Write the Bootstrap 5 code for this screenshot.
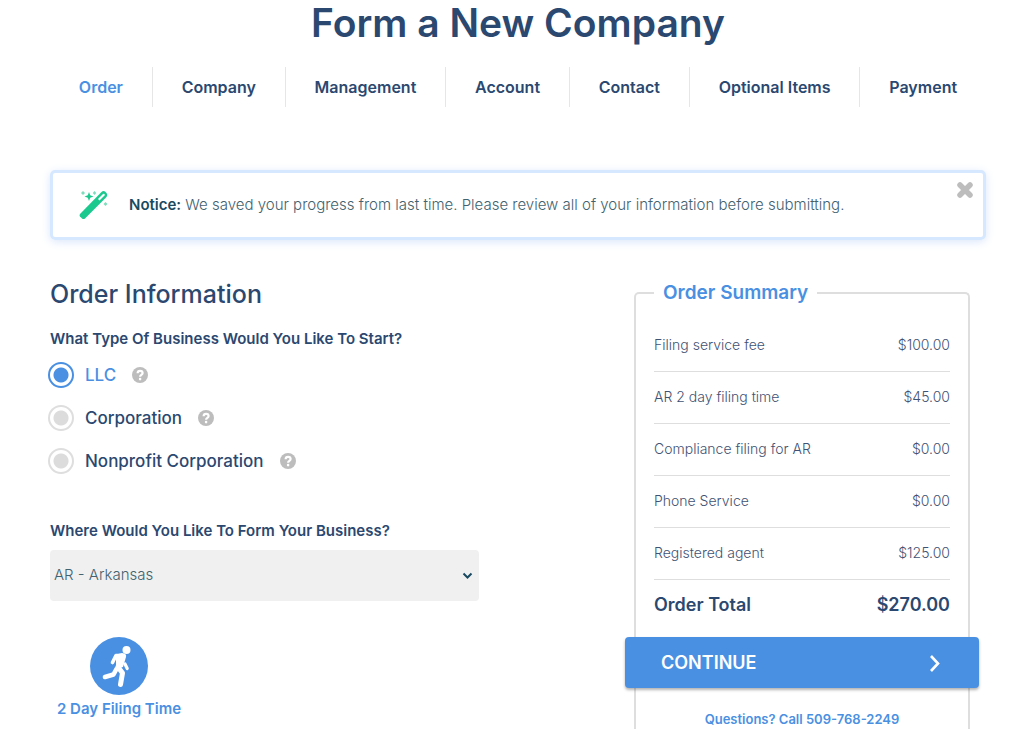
<!DOCTYPE html>
<html lang="en">
<head>
<meta charset="utf-8">
<meta name="viewport" content="width=device-width, initial-scale=1">
<title>Form a New Company</title>
<link href="https://cdn.jsdelivr.net/npm/bootstrap@5.3.0/dist/css/bootstrap.min.css" rel="stylesheet">
<style>
:root { --navy: #2b4870; --blue: #4a90e2; --line: #dedede; --mute: #bdbdbd; }
body { font-family: Inter, "Open Sans", sans-serif; font-size: 14px; line-height: 20px; color: var(--navy); background: #fff; }
a { color: var(--blue); text-decoration: none; }
.page { padding: 0 38px 0 50px; }
.page-title { font-size: 39px; line-height: 46px; font-weight: 600; }
.steps { margin-top: 21px; }
.steps .nav-item + .nav-item { border-left: 1px solid #e6e6e6; }
.steps .nav-link { color: var(--navy); font-size: 16px; line-height: 40px; font-weight: 600; padding: 0; }
.steps .nav-link.active { color: var(--blue); }
.notice { margin-top: 63px; padding: 17px 26px; border: 3px solid #d6e8ff; border-radius: 5px; box-shadow: 0 2px 10px #dbe7fb; color: #42626f; font-size: 15px; font-weight: 300; }
.notice svg { margin-right: 20px; }
.notice strong { color: #194a60; font-weight: 600; }
.notice-close { top: 7px; right: 8px; line-height: 0; }
.notice-close svg { margin: 0; }
.columns { margin-top: 41px; }
.section-title { font-size: 25px; line-height: 26px; font-weight: 500; }
.question { font-size: 15px; line-height: 20px; font-weight: 600; }
.choices { margin-top: 22px; }
.choices .question { margin-bottom: 13px; }
.choice { height: 26px; margin-bottom: 17px; margin-left: -2px; }
.choice label { font-size: 17px; line-height: 24px; font-weight: 500; margin: 0 16px 0 11px; }
.choice input { appearance: none; width: 26px; height: 26px; margin: 0; border: 2px solid var(--line); border-radius: 50%; background: radial-gradient(circle, #dcdcdc 7px, #fff 8px); }
.choice input:checked { border-color: var(--blue); background: radial-gradient(circle, var(--blue) 7px, #fff 8px); }
.choice input:checked + label { color: var(--blue); }
.state-field { margin-top: 47px; }
.state-field select { margin-top: 9px; height: 51px; border: 0; border-radius: 4px; color: #42626f; font-size: 15px; font-weight: 300; padding: 0 32px 0 4px; background-color: #f0f0f0; background-position: right 6px center; background-size: 11px 11px; background-image: url("data:image/svg+xml,%3Csvg xmlns='http://www.w3.org/2000/svg' viewBox='0 0 11 11'%3E%3Cpath d='M1.5 3.5l4 4 4-4' fill='none' stroke='%23194a60' stroke-width='2'/%3E%3C/svg%3E"); }
.filing { margin-top: 35px; width: 138px; gap: 3px; font-size: 15px; line-height: 20px; font-weight: 600; }
.summary { border: 2px solid var(--line); border-bottom: 0; border-radius: 5px 5px 0 0; padding: 0 18px; }
.summary-title { float: none; width: auto; font-size: 19px; line-height: 24px; font-weight: 600; color: var(--blue); padding: 0 9px; margin-bottom: 14px; }
.fees th, .fees td { height: 52px; padding: 0; vertical-align: middle; font-weight: 300; color: #3f5273; border-bottom: 1px solid var(--line); }
.fees tfoot th, .fees tfoot td { font-size: 18px; font-weight: 600; color: var(--navy); border: 0; }
.continue { margin: 6px -29px 0; padding: 0 36px; height: 51px; border: 0; border-radius: 4px; background: var(--blue); color: #fff; font-size: 18px; font-weight: 600; box-shadow: 0 2px 3px rgba(0,0,0,.3); }
.call { margin-top: 21px; font-size: 13px; line-height: 20px; font-weight: 600; }
@media (min-width: 768px) {
  .order-form { padding-right: 39px; }
  .order-side { padding-left: 38px; padding-right: 16px; }
}
</style>
</head>
<body>
<svg class="d-none" aria-hidden="true">
  <symbol id="help" viewBox="0 0 16 16"><circle cx="8" cy="8" r="8" fill="#bdbdbd"/><path d="M5.600 6.200c.1-3.300 5-3.100 5-.1 0 1.900-2.500 1.700-2.500 3.600" fill="none" stroke="#fff" stroke-width="2.200"/><circle cx="8.100" cy="12.100" r="1.300" fill="#fff"/></symbol>
</svg>
<main class="page">
  <h1 class="page-title text-center m-0">Form a New Company</h1>
  <nav aria-label="Steps">
    <ul class="nav nav-fill steps">
      <li class="nav-item"><a class="nav-link active" href="#order">Order</a></li>
      <li class="nav-item"><a class="nav-link" href="#company">Company</a></li>
      <li class="nav-item"><a class="nav-link" href="#management">Management</a></li>
      <li class="nav-item"><a class="nav-link" href="#account">Account</a></li>
      <li class="nav-item"><a class="nav-link" href="#contact">Contact</a></li>
      <li class="nav-item"><a class="nav-link" href="#optional">Optional Items</a></li>
      <li class="nav-item"><a class="nav-link" href="#payment">Payment</a></li>
    </ul>
  </nav>
  <div class="notice position-relative d-flex align-items-center" role="status">
    <svg class="flex-shrink-0" width="30" height="30" viewBox="0 0 30 30" aria-hidden="true">
      <path d="M1 24 22.500 2q2-1.800 4 0l1 1q1.800 2 0 4L6 28.500q-1.500 1-3 0L1 26.500Q0 25.200 1 24z" fill="#1bc98e"/>
      <path d="m19 9 5-5q.8-.5 1.500 0 .5.800 0 1.500l-5 5z" fill="#fff"/>
      <path d="m10 2 1.200 3.300L14.500 6.500l-3.300 1.200L10 11 8.800 7.700 5.500 6.500l3.300-1.200z" fill="#1bc98e"/>
      <g fill="#7fdcbd"><path d="m4 1 2 2-2 2-2-2zM15.500 1l1.700 2-1.700 2-1.700-2zM26.500 12l2 2-2 2-2-2z"/></g>
    </svg>
    <span><strong>Notice:</strong> We saved your progress from last time. Please review all of your information before submitting.</span>
    <button class="btn notice-close position-absolute p-0 border-0" type="button" aria-label="Close">
      <svg width="20" height="20" viewBox="0 0 20 20"><path d="m5 5 10 10M15 5 5 15" stroke="#bdbdbd" stroke-width="5.500" stroke-linecap="round"/></svg>
    </button>
  </div>

  <form class="row gx-0 justify-content-between columns">
    <div class="col-12 col-md-6 order-form">
      <h2 class="section-title m-0">Order Information</h2>
      <fieldset class="choices">
        <legend class="question">What Type Of Business Would You Like To Start?</legend>
        <div class="choice d-flex align-items-center">
          <input type="radio" name="type" id="llc" checked><label for="llc">LLC</label>
          <button type="button" class="btn p-0 border-0 lh-1 d-flex" aria-label="About LLC"><svg width="16" height="16"><use href="#help"/></svg></button>
        </div>
        <div class="choice d-flex align-items-center">
          <input type="radio" name="type" id="corp"><label for="corp">Corporation</label>
          <button type="button" class="btn p-0 border-0 lh-1 d-flex" aria-label="About corporations"><svg width="16" height="16"><use href="#help"/></svg></button>
        </div>
        <div class="choice d-flex align-items-center mb-0">
          <input type="radio" name="type" id="nonprofit"><label for="nonprofit">Nonprofit Corporation</label>
          <button type="button" class="btn p-0 border-0 lh-1 d-flex" aria-label="About nonprofit corporations"><svg width="16" height="16"><use href="#help"/></svg></button>
        </div>
      </fieldset>
      <div class="state-field">
        <label class="question d-block" for="state">Where Would You Like To Form Your Business?</label>
        <select class="form-select" id="state"><option>AR - Arkansas</option></select>
      </div>
      <a class="filing d-flex flex-column align-items-center" href="#filing">
        <svg width="60" height="60" viewBox="0 0 60 60" aria-hidden="true">
          <circle cx="30" cy="30" r="29" fill="#4a90e2"/>
          <circle cx="37.500" cy="14" r="4" fill="#fff"/>
          <path d="m27 18.500 6-1.500q5 .5 4 4L34 31l-6 2-1-5z" fill="#fff"/>
          <g fill="none" stroke="#fff" stroke-linecap="round" stroke-linejoin="round">
            <path d="M32 19.500h-5l-3.500 7" stroke-width="3.600"/>
            <path d="m36 28 2.200 4.500" stroke-width="3.200"/>
            <path d="m32 23-3 8 4.500 6-2 11.500" stroke-width="5"/>
            <path d="m27.500 33-3 5.500L16 41" stroke-width="4.600"/>
          </g>
        </svg>
        <span>2 Day Filing Time</span>
      </a>
    </div>

    <div class="col-12 col-md-5 order-side">
      <fieldset class="summary">
        <legend class="summary-title">Order Summary</legend>
        <table class="fees w-100">
          <tbody>
            <tr><th scope="row">Filing service fee</th><td class="text-end">$100.00</td></tr>
            <tr><th scope="row">AR 2 day filing time</th><td class="text-end">$45.00</td></tr>
            <tr><th scope="row">Compliance filing for AR</th><td class="text-end">$0.00</td></tr>
            <tr><th scope="row">Phone Service</th><td class="text-end">$0.00</td></tr>
            <tr><th scope="row">Registered agent</th><td class="text-end">$125.00</td></tr>
          </tbody>
          <tfoot><tr><th scope="row">Order Total</th><td class="text-end">$270.00</td></tr></tfoot>
        </table>
        <div class="d-grid">
          <button class="continue btn d-flex align-items-center justify-content-between" type="submit">CONTINUE
            <svg width="16" height="20" viewBox="0 0 16 20" aria-hidden="true"><path d="m4 3 7 7.500L4 18" fill="none" stroke="#fff" stroke-width="2.600"/></svg>
          </button>
        </div>
        <p class="call text-center mb-0"><a href="tel:5097682249">Questions? Call 509-768-2249</a></p>
      </fieldset>
    </div>
  </form>
</main>
<script src="https://cdn.jsdelivr.net/npm/bootstrap@5.3.0/dist/js/bootstrap.bundle.min.js"></script>
</body>
</html>
